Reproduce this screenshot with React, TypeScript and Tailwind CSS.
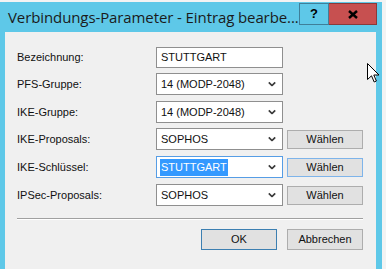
import React from "react";

const font = { fontFamily: '"Liberation Sans", Arial, sans-serif' };

function Chevron() {
  return (
    <svg width="8" height="5" viewBox="0 0 8 5" className="absolute right-[6px] top-1/2 -translate-y-1/2">
      <polyline points="0.8,0.8 4,4 7.2,0.8" fill="none" stroke="#3c3c3c" strokeWidth="1.7" />
    </svg>
  );
}

function Combo({ text, selected }: { text: string; selected?: boolean }) {
  return (
    <div
      className={
        "relative w-[127px] h-[22px] bg-white border flex items-center pl-[3px] text-[11px] text-[#111] " +
        (selected ? "border-[#569de5]" : "border-[#8f8f8f]")
      }
    >
      {selected ? (
        <span className="bg-[#3399ff] text-white px-[1px] leading-[17px] h-[17px]">{text}</span>
      ) : (
        <span className="px-[1px]">{text}</span>
      )}
      <Chevron />
    </div>
  );
}

function Btn({ label, border = "border-[#adadad]", h = "h-[19px]" }: { label: string; border?: string; h?: string }) {
  return (
    <div
      className={`w-[76px] ${h} flex items-center justify-center bg-[#e1e1e1] border text-[11px] text-[#111] ${border}`}
    >
      {label}
    </div>
  );
}

function Row({ label, children, mt }: { label: string; children: React.ReactNode; mt: string }) {
  return (
    <div className={`flex items-center h-[22px] ${mt}`}>
      <div className="w-[139px] text-[11px] text-[#111] pt-[1px]">{label}</div>
      {children}
    </div>
  );
}

export default function App() {
  return (
    <div className="relative w-[386px] h-[269px] bg-[#f3f3f3] overflow-hidden" style={font}>
      <div className="w-[382px] h-[267px] mt-[2px] bg-[#5ec8e8] flex flex-col">
        {/* title bar */}
        <div className="h-[30px] flex items-start shrink-0">
          <div
            className="pl-[8px] pt-[4px] text-[15px] text-[#1b1b1b] whitespace-nowrap"
            style={{ fontFamily: '"Open Sans", "Noto Sans", sans-serif', letterSpacing: "-0.1px" }}
          >
            Verbindungs-Parameter - Eintrag bearbe...
          </div>
          <div className="ml-auto mr-[5px] mt-[1px] flex">
            <div className="w-[30px] h-[22px] border border-[#3f7f99] flex items-center justify-center text-[13px] font-bold text-black">
              ?
            </div>
            <div className="w-[48px] h-[22px] bg-[#c75050] border border-[#8a3a3a] border-l-0 flex items-center justify-center">
              <svg width="10" height="9" viewBox="0 0 10 9">
                <line x1="1" y1="1" x2="9" y2="8" stroke="#000" strokeWidth="2.4" />
                <line x1="9" y1="1" x2="1" y2="8" stroke="#000" strokeWidth="2.4" />
              </svg>
            </div>
          </div>
        </div>
        {/* content */}
        <div className="ml-[5px] w-[371px] flex-1 bg-[#f0f0f0] pl-[12px] pt-[14px] flex flex-col">
          <Row label="Bezeichnung:" mt="">
            <div className="w-[127px] h-[21px] bg-white border border-[#8f8f8f] flex items-center pl-[4px] text-[11px] text-[#111]">
              STUTTGART
            </div>
          </Row>
          <Row label="PFS-Gruppe:" mt="mt-[5px]">
            <Combo text="14 (MODP-2048)" />
          </Row>
          <Row label="IKE-Gruppe:" mt="mt-[6px]">
            <Combo text="14 (MODP-2048)" />
          </Row>
          <Row label="IKE-Proposals:" mt="mt-[5px]">
            <Combo text="SOPHOS" />
            <div className="ml-[4px]">
              <Btn label="Wählen" />
            </div>
          </Row>
          <Row label="IKE-Schlüssel:" mt="mt-[6px]">
            <Combo text="STUTTGART" selected />
            <div className="ml-[4px]">
              <Btn label="Wählen" border="border-[#7eb4ea]" />
            </div>
          </Row>
          <Row label="IPSec-Proposals:" mt="mt-[6px]">
            <Combo text="SOPHOS" />
            <div className="ml-[4px]">
              <Btn label="Wählen" />
            </div>
          </Row>
          <div className="mt-[12px] w-[346px] border-t border-[#a0a0a0] border-b border-b-white" />
          <div className="mt-[9px] w-[346px] flex justify-end gap-[10px]">
            <Btn label="OK" border="border-[#3c7fb1]" h="h-[21px]" />
            <Btn label="Abbrechen" h="h-[21px]" />
          </div>
        </div>
      </div>
      {/* mouse cursor */}
      <svg className="absolute left-[367px] top-[63px]" width="13" height="21" viewBox="0 0 13 21">
        <path d="M0.5 0.5 L0.5 16.5 L4.5 12.8 L7.2 19 L9.4 18 L6.8 12 L12 12 Z" fill="#fff" stroke="#000" strokeWidth="1" />
      </svg>
    </div>
  );
}
